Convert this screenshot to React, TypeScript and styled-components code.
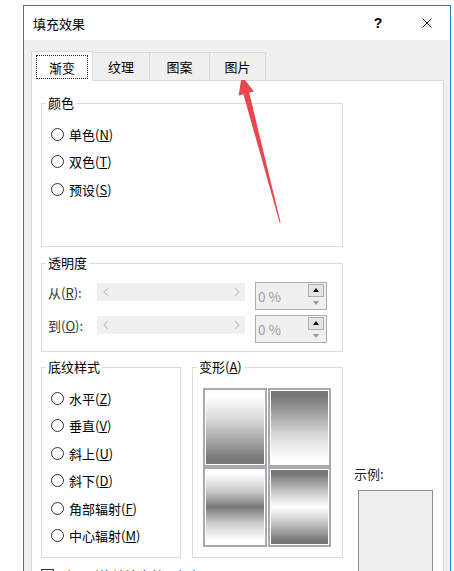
import React from 'react';
import styled, { createGlobalStyle } from 'styled-components';

const GlobalStyle = createGlobalStyle`
  html, body {
    margin: 0;
    padding: 0;
    background: #fff;
    overflow: hidden;
  }
  body {
    font-family: "Noto Sans CJK SC", "Noto Sans", "Liberation Sans", sans-serif;
    font-size: 13px;
    color: #000;
  }
`;

const Page = styled.div`
  position: relative;
  height: 571px;
  padding: 5px 0 0 23px;
  box-sizing: border-box;
  overflow: hidden;
`;

const Dialog = styled.div`
  width: 428px;
  height: 640px;
  box-sizing: border-box;
  border: 1px solid #1a80d6;
  border-bottom: none;
  background: #f0f0f0;
  display: flex;
  flex-direction: column;
`;

const TitleBar = styled.div`
  height: 34px;
  flex-shrink: 0;
  background: #fff;
  display: flex;
  align-items: center;
  padding-left: 9px;
  font-size: 13px;
`;

const TitleText = styled.span`
  flex: 1;
`;

const HelpButton = styled.span`
  width: 14px;
  text-align: center;
  font-weight: bold;
  font-family: "Liberation Sans", sans-serif;
  font-size: 14px;
  margin-right: 37px;
`;

const CloseButton = styled.span`
  display: flex;
  margin-right: 18px;
`;

const Body = styled.div`
  flex: 1;
  display: flex;
  flex-direction: column;
  padding: 11px 6px 0 7px;
`;

const TabRow = styled.div`
  display: flex;
  align-items: flex-end;
  height: 29px;
  flex-shrink: 0;
  position: relative;
  z-index: 1;
`;

const Tab = styled.div<{ $active?: boolean; $w: number }>`
  width: ${(p) => p.$w}px;
  height: ${(p) => (p.$active ? 30 : 28)}px;
  margin-bottom: ${(p) => (p.$active ? -1 : 0)}px;
  margin-left: -1px;
  &:first-child {
    margin-left: 0;
  }
  box-sizing: border-box;
  border: 1px solid #d9d9d9;
  border-bottom: none;
  background: ${(p) => (p.$active ? '#fff' : '#f0f0f0')};
  padding: ${(p) => (p.$active ? '3px 4px 2px 4px' : '0')};
  display: flex;
  align-items: center;
  justify-content: center;
  font-size: 13px;
  position: relative;
  z-index: ${(p) => (p.$active ? 2 : 1)};
`;

const FocusRing = styled.div`
  flex: 1;
  align-self: stretch;
  border: 1px dotted #222;
  display: flex;
  align-items: center;
  justify-content: center;
`;

const Panel = styled.div`
  flex: 1;
  background: #fff;
  border: 1px solid #d9d9d9;
  padding: 22px 0 0 9px;
  display: flex;
  flex-direction: column;
`;

const Group = styled.div<{ $w: number; $h: number }>`
  width: ${(p) => p.$w}px;
  height: ${(p) => p.$h}px;
  box-sizing: border-box;
  border: 1px solid #dcdcdc;
  flex-shrink: 0;
`;

const Legend = styled.div`
  width: fit-content;
  margin: -9px 0 0 4px;
  padding: 0 2px;
  background: #fff;
  line-height: 16px;
  font-size: 13px;
`;

const RadioList = styled.div`
  display: flex;
  flex-direction: column;
  gap: 7.5px;
  padding: 13px 0 0 9px;
`;

const RadioRow = styled.div`
  display: flex;
  align-items: center;
  gap: 5px;
  height: 20px;
  white-space: nowrap;
`;

const RadioCircle = styled.span`
  width: 13px;
  height: 13px;
  box-sizing: border-box;
  border: 1px solid #333;
  border-radius: 50%;
  background: #fff;
  flex-shrink: 0;
`;

const TransList = styled.div`
  display: flex;
  flex-direction: column;
  gap: 5px;
  padding: 11px 0 0 6px;
`;

const TransRow = styled.div`
  display: flex;
  align-items: flex-start;
  height: 28px;
`;

const TransLabel = styled.span`
  width: 49px;
  line-height: 22px;
  color: #333;
`;

const Slider = styled.div`
  width: 148px;
  height: 18px;
  margin-top: 1px;
  background: #f0f0f0;
  display: flex;
  align-items: center;
  justify-content: space-between;
  padding: 0 5px 0 6px;
  box-sizing: border-box;
`;

const SpinBox = styled.div`
  width: 72px;
  height: 28px;
  margin-left: 10px;
  box-sizing: border-box;
  border: 1px solid #acacac;
  background: #f0f0f0;
  display: flex;
  align-items: center;
  padding-left: 2px;
`;

const SpinValue = styled.span`
  flex: 1;
  color: #a09c98;
  font-size: 13.5px;
`;

const SpinButtons = styled.div`
  width: 16px;
  display: flex;
  flex-direction: column;
  margin-right: 2px;
`;

const SpinUp = styled.div`
  height: 13px;
  box-sizing: border-box;
  border: 1px solid #adadad;
  background: #e5e5e5;
  display: flex;
  align-items: center;
  justify-content: center;
`;

const SpinDown = styled.div`
  height: 12px;
  display: flex;
  align-items: center;
  justify-content: center;
`;

const Triangle = styled.span<{ $up?: boolean; $color: string }>`
  width: 0;
  height: 0;
  border-left: 3.5px solid transparent;
  border-right: 3.5px solid transparent;
  ${(p) => (p.$up ? 'border-bottom' : 'border-top')}: 4px solid ${(p) => p.$color};
`;

const BottomRow = styled.div`
  display: flex;
  align-items: flex-start;
  height: 191px;
  flex-shrink: 0;
  margin-top: 15px;
  gap: 11px;
`;

const ThumbGrid = styled.div`
  display: grid;
  grid-template-columns: 64px 63px;
  grid-template-rows: 79px 80px;
  gap: 0 1px;
  margin: 13px 0 0 10px;
`;

const Thumb = styled.div<{ $bg: string }>`
  box-sizing: border-box;
  border: 2px solid #a8aab1;
  padding: 1px;
  background: ${(p) => p.$bg};
  background-clip: content-box;
`;

const ExampleCol = styled.div`
  height: 191px;
  display: flex;
  flex-direction: column;
  padding-top: 98px;
  box-sizing: border-box;
`;

const ExampleLabel = styled.span`
  line-height: 18px;
  color: #222;
`;

const ExampleBox = styled.div`
  width: 75px;
  height: 110px;
  flex-shrink: 0;
  box-sizing: border-box;
  margin: 7px 0 0 4px;
  border: 1px solid #8c8c8c;
  background: #f0f0f0;
`;

const CheckRow = styled.div`
  display: flex;
  align-items: flex-start;
  gap: 6px;
  margin-top: 11px;
  white-space: nowrap;
`;

const CheckBox = styled.span`
  width: 13px;
  height: 13px;
  box-sizing: border-box;
  border: 1px solid #333;
  background: #fff;
  flex-shrink: 0;
`;

const CheckText = styled.span`
  line-height: 13px;
`;

const ArrowLayer = styled.svg`
  position: absolute;
  left: 0;
  top: 0;
  pointer-events: none;
`;

const Chevron = ({ left }: { left?: boolean }) => (
  <svg width="6" height="10" viewBox="0 0 6 10">
    <path
      d={left ? 'M5 1 L1 5 L5 9' : 'M1 1 L5 5 L1 9'}
      fill="none"
      stroke="#c4c4c4"
      strokeWidth="1.2"
    />
  </svg>
);

const Radio = ({ label, k }: { label: string; k: string }) => (
  <RadioRow>
    <RadioCircle />
    <span>
      {label}(<u>{k}</u>)
    </span>
  </RadioRow>
);

const Spin = () => (
  <SpinBox>
    <SpinValue>0 %</SpinValue>
    <SpinButtons>
      <SpinUp>
        <Triangle $up $color="#111" />
      </SpinUp>
      <SpinDown>
        <Triangle $color="#9a9a9a" />
      </SpinDown>
    </SpinButtons>
  </SpinBox>
);

const tabs = [
  { label: '渐变', w: 62, active: true },
  { label: '纹理', w: 58 },
  { label: '图案', w: 61 },
  { label: '图片', w: 57 },
];

const gradients = [
  'linear-gradient(to bottom, #fff 8%, #d8d8d8 40%, #777 92%)',
  'linear-gradient(to bottom, #777 8%, #d8d8d8 60%, #fff 92%)',
  'linear-gradient(to bottom, #fff 6%, #c8c8c8 30%, #777 50%, #c8c8c8 70%, #fff 94%)',
  'linear-gradient(to bottom, #777 6%, #c8c8c8 30%, #fff 50%, #c8c8c8 70%, #777 94%)',
];

export default function App() {
  return (
    <Page>
      <GlobalStyle />
      <Dialog>
        <TitleBar>
          <TitleText>填充效果</TitleText>
          <HelpButton>?</HelpButton>
          <CloseButton>
            <svg width="10" height="10" viewBox="0 0 10 10">
              <path d="M0.5 0.5 L9.5 9.5 M9.5 0.5 L0.5 9.5" stroke="#222" strokeWidth="1" />
            </svg>
          </CloseButton>
        </TitleBar>
        <Body>
          <TabRow>
            {tabs.map((t) => (
              <Tab key={t.label} $w={t.w} $active={t.active}>
                {t.active ? <FocusRing>{t.label}</FocusRing> : t.label}
              </Tab>
            ))}
          </TabRow>
          <Panel>
            <Group $w={302} $h={144}>
              <Legend>颜色</Legend>
              <RadioList>
                <Radio label="单色" k="N" />
                <Radio label="双色" k="T" />
                <Radio label="预设" k="S" />
              </RadioList>
            </Group>
            <Group $w={302} $h={89} style={{ marginTop: 16 }}>
              <Legend>透明度</Legend>
              <TransList>
                <TransRow>
                  <TransLabel>
                    从(<u>R</u>):
                  </TransLabel>
                  <Slider>
                    <Chevron left />
                    <Chevron />
                  </Slider>
                  <Spin />
                </TransRow>
                <TransRow>
                  <TransLabel>
                    到(<u>O</u>):
                  </TransLabel>
                  <Slider>
                    <Chevron left />
                    <Chevron />
                  </Slider>
                  <Spin />
                </TransRow>
              </TransList>
            </Group>
            <BottomRow>
              <Group $w={140} $h={191}>
                <Legend>底纹样式</Legend>
                <RadioList>
                  <Radio label="水平" k="Z" />
                  <Radio label="垂直" k="V" />
                  <Radio label="斜上" k="U" />
                  <Radio label="斜下" k="D" />
                  <Radio label="角部辐射" k="F" />
                  <Radio label="中心辐射" k="M" />
                </RadioList>
              </Group>
              <Group $w={151} $h={191}>
                <Legend>
                  变形(<u>A</u>)
                </Legend>
                <ThumbGrid>
                  {gradients.map((g) => (
                    <Thumb key={g} $bg={g} />
                  ))}
                </ThumbGrid>
              </Group>
              <ExampleCol>
                <ExampleLabel>示例:</ExampleLabel>
                <ExampleBox />
              </ExampleCol>
            </BottomRow>
            <CheckRow>
              <CheckBox />
              <CheckText>
                随图形旋转填充效果(<u>W</u>)
              </CheckText>
            </CheckRow>
          </Panel>
        </Body>
      </Dialog>
      <ArrowLayer width="454" height="571" viewBox="0 0 454 571">
        <polygon
          points="241.7,76 254,91.4 249.2,92.6 280.6,222.5 279.6,222.7 243.4,94.2 238.6,95.4"
          fill="#e8484c"
        />
      </ArrowLayer>
    </Page>
  );
}
